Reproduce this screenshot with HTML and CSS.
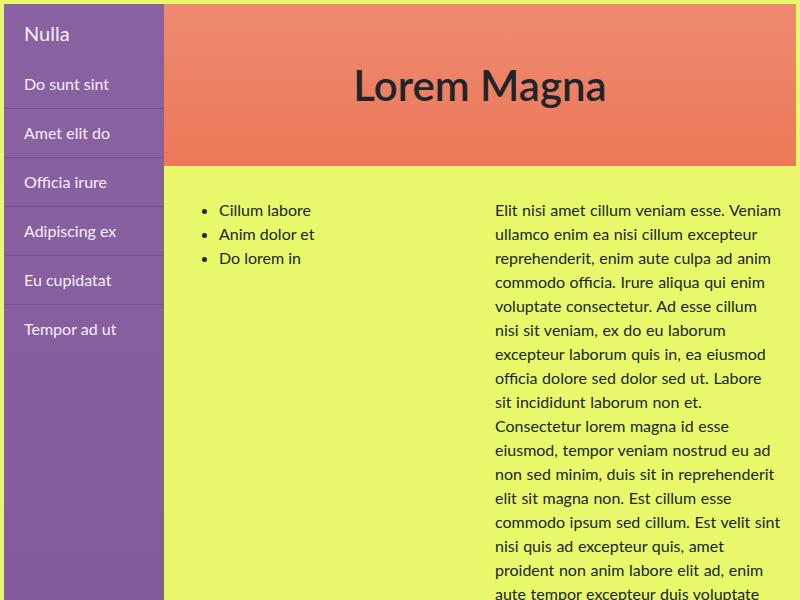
FILE: index.html
```html
<!DOCTYPE html>
<html lang="en">
<head>
<meta charset="utf-8">
<title>Lorem Magna</title>
<link rel="stylesheet" href="styles.css">
</head>
<body>
<div class="page">
  <nav class="sidebar">
    <div class="brand">Nulla</div>
    <ul class="nav">
      <li><a href="#">Do sunt sint</a></li>
      <li><a href="#">Amet elit do</a></li>
      <li><a href="#">Officia irure</a></li>
      <li><a href="#">Adipiscing ex</a></li>
      <li><a href="#">Eu cupidatat</a></li>
      <li><a href="#">Tempor ad ut</a></li>
    </ul>
  </nav>
  <main class="main">
    <header class="hero">
      <h1>Lorem Magna</h1>
    </header>
    <section class="content">
      <div class="col">
        <ul class="list">
          <li>Cillum labore</li>
          <li>Anim dolor et</li>
          <li>Do lorem in</li>
        </ul>
      </div>
      <div class="col">
        <p>Elit nisi amet cillum veniam esse. Veniam ullamco enim ea nisi cillum excepteur reprehenderit, enim aute culpa ad anim commodo officia. Irure aliqua qui enim voluptate consectetur. Ad esse cillum nisi sit veniam, ex do eu laborum excepteur laborum quis in, ea eiusmod officia dolore sed dolor sed ut. Labore sit incididunt laborum non et. Consectetur lorem magna id esse eiusmod, tempor veniam nostrud eu ad non sed minim, duis sit in reprehenderit elit sit magna non. Est cillum esse commodo ipsum sed cillum. Est velit sint nisi quis ad excepteur quis, amet proident non anim labore elit ad, enim aute tempor excepteur duis voluptate velit. Nostrud dolore aliqua sunt esse.</p>
      </div>
    </section>
  </main>
</div>
</body>
</html>
```

FILE: styles.css
```css
html, body {
  margin: 0;
  padding: 0;
}
body {
  background: #e8f86a;
  font-family: "Lato", "Noto Sans", sans-serif;
  font-size: 16px;
  line-height: 24px;
  color: #212529;
}
.page {
  display: flex;
  padding: 4px;
  min-height: 800px;
}
.sidebar {
  width: 160px;
  flex: 0 0 160px;
  background: linear-gradient(to bottom, #8a62a2, #825a9a);
  color: #f6eefc;
}
.brand {
  font-size: 20px;
  line-height: 27px;
  padding: 16px 20px 13px;
}
.nav {
  list-style: none;
  margin: 0;
  padding: 0;
}
.nav li {
  border-bottom: 1px solid #74528c;
}
.nav li:last-child {
  border-bottom: none;
}
.nav a {
  display: block;
  padding: 12px 20px;
  color: #f6eefc;
  text-decoration: none;
  line-height: 24px;
}
.main {
  flex: 1;
  display: flex;
  flex-direction: column;
}
.hero {
  height: 162px;
  background: linear-gradient(to bottom, #ee8a72, #ec7858);
  display: flex;
  align-items: center;
  justify-content: center;
}
.hero h1 {
  margin: 0;
  font-size: 42px;
  font-weight: 600;
  line-height: 1.2;
  color: #212529;
}
.content {
  display: grid;
  grid-template-columns: 1fr 1fr;
}
.col {
  padding: 16px 15px;
}
.list {
  margin: 16px 0;
  padding-left: 40px;
}
.col p {
  margin: 16px 0;
  word-spacing: 0.5px;
}
```
